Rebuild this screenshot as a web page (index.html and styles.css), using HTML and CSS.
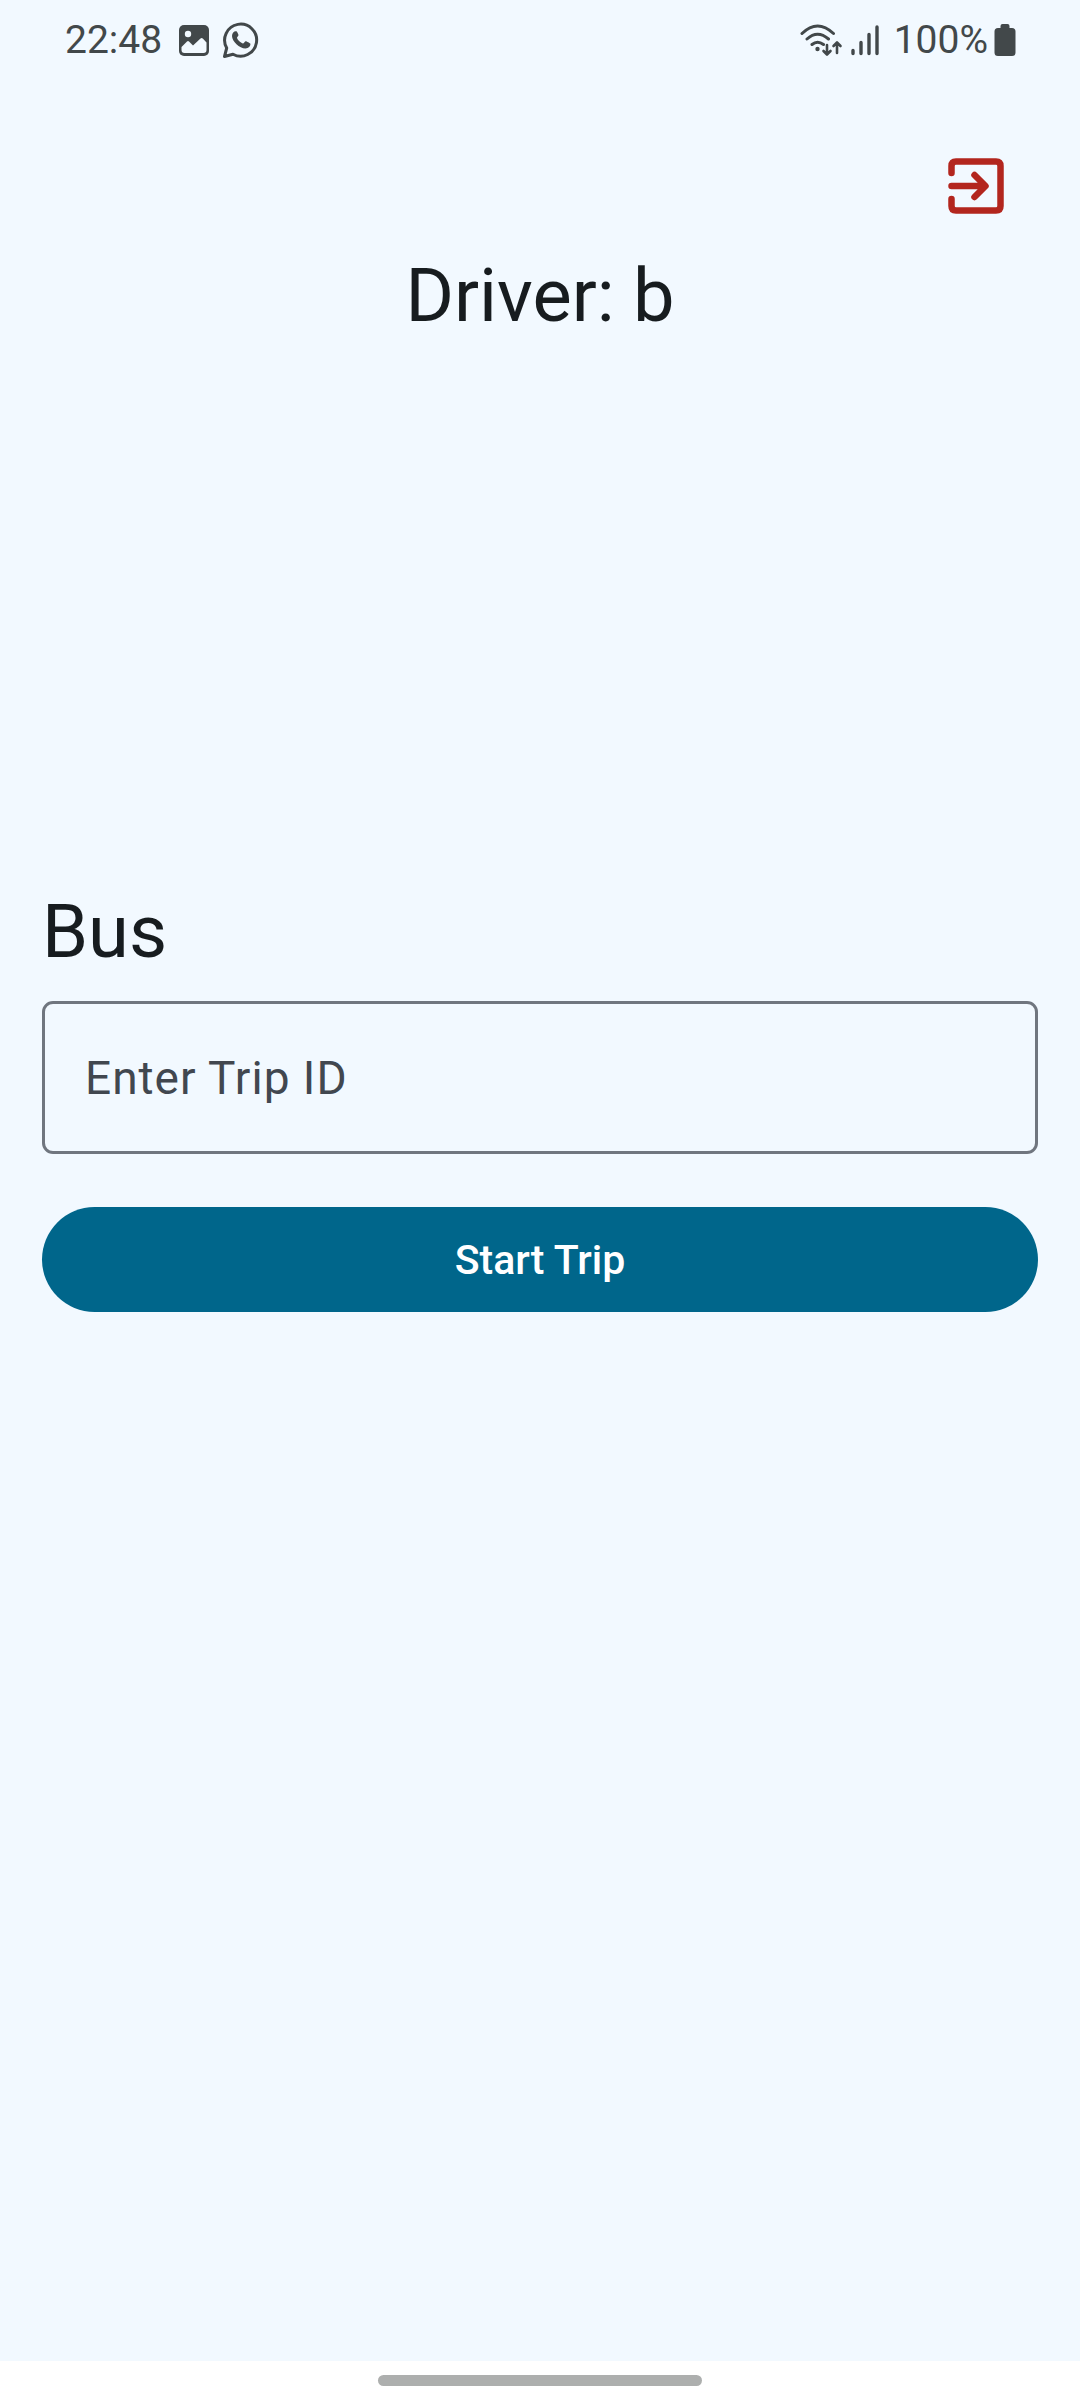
FILE: index.html
```html
<!DOCTYPE html>
<html lang="en">
<head>
<meta charset="utf-8">
<meta name="viewport" content="width=device-width, initial-scale=1">
<title>Driver</title>
<link rel="stylesheet" href="styles.css">
</head>
<body>
<div class="status-bar">
  <div class="status-group">
    <span class="status-time">22:48</span>
    <svg class="icon-image" width="32" height="32" viewBox="0 0 32 32" aria-hidden="true">
      <rect x="1" y="1" width="30" height="31" rx="5" fill="#42484a"/>
      <circle cx="10" cy="10" r="3.2" fill="#f2f9ff"/>
      <path d="M3.500 23L9 17.500Q10 16.500 11 17.500L15 21.500L22.500 14.500Q23.700 13.500 25 14.700L28.500 18.500V26Q28.500 29 25.500 29H6.500Q3.500 29 3.500 26Z" fill="#f2f9ff"/>
    </svg>
    <svg class="icon-chat" width="38" height="38" viewBox="0 0 38 38" aria-hidden="true">
      <path d="M2.500 35.500L4.700 27A16 16 0 1 1 11 33.200Z" fill="none" stroke="#42484a" stroke-width="3" stroke-linejoin="round"/>
      <path d="M13.600 10.200C12.300 10.100 10 12 10 15C10 20.500 17.500 27.500 23.500 27.500C26.500 27.500 28.600 25.300 28.400 22.800C28.300 22 24.200 20 23.500 20.200C22.600 20.500 21.800 22.700 20.800 22.500C18.500 21.700 15.800 19.200 15 17C14.900 16 16.500 15 16.500 14C16.400 13.200 15.100 10.400 14.400 10.200Z" fill="#42484a"/>
    </svg>
  </div>
  <div class="status-group">
    <svg width="82" height="34" viewBox="0 0 82 34" aria-hidden="true" fill="none" stroke="#42484a" stroke-width="3" stroke-linecap="round">
      <path d="M2 10.500Q17.500 -4.500 33.500 10.500M7 16Q17.500 6.500 28.500 16M12 21.500Q17.500 17 23.500 21.500"/>
      <circle cx="17.500" cy="26" r="2.200" fill="#42484a" stroke="none"/>
      <path d="M27 22V31M23.500 28L27 31.500L30.500 28M37 30V20M33.500 23L37 19.500L40.500 23" stroke-width="2.600" stroke-linejoin="round"/>
      <path d="M53 27.500V30.500M61 19.500V30.500M69 11.500V30.500M77 4V30.500" stroke-width="3.400"/>
    </svg>
    <span class="status-battery">100%</span>
    <svg class="icon-battery" width="22" height="34" viewBox="0 0 22 34" aria-hidden="true">
      <path d="M6.500 5V3Q6.500 1 8.500 1H13.500Q15.500 1 15.500 3V5H18Q21.500 5 21.500 8.500V29.500Q21.500 33 18 33H4Q.5 33 .5 29.500V8.500Q.5 5 4 5Z" fill="#42484a"/>
    </svg>
  </div>
</div>
<main class="screen">
  <div class="toolbar">
    <button class="exit-button" type="button" aria-label="Log out">
      <svg width="56" height="56" viewBox="0 0 56 56" aria-hidden="true" fill="none" stroke="#b3261e" stroke-width="6.500" stroke-linecap="round" stroke-linejoin="round">
        <path d="M3.500 15V8Q3.500 3.500 8 3.500H48Q52.500 3.500 52.500 8V48Q52.500 52.500 48 52.500H8Q3.500 52.500 3.500 48V41"/>
        <path d="M3.500 28H36M26.500 17L37.500 28L26.500 39"/>
      </svg>
    </button>
  </div>
  <h1 class="title driver">Driver: b</h1>
  <form class="trip-form">
    <label class="title" for="trip-id">Bus</label>
    <input class="trip-input" id="trip-id" type="text" placeholder="Enter Trip ID">
    <button class="start-button" type="button">Start Trip</button>
  </form>
</main>
<div class="nav-bar"><div class="nav-handle"></div></div>
</body>
</html>
```
FILE: styles.css
```css
* {
  box-sizing: border-box;
}

body {
  display: flex;
  flex-direction: column;
  min-height: 100vh;
  margin: 0;
  background: #f2f9ff;
  color: #171c1f;
  font-family: Roboto, sans-serif;
}

svg {
  display: block;
}

.status-bar {
  display: flex;
  justify-content: space-between;
  align-items: center;
  height: 80px;
  padding: 0 64px 0 65px;
  color: #42484a;
  font-size: 39px;
  line-height: 48px;
}

.status-group {
  display: flex;
  align-items: center;
}

.icon-image {
  margin-left: 16px;
}

.icon-chat {
  margin-left: 12px;
}

.status-battery {
  margin-left: 12px;
}

.icon-battery {
  margin-left: 6px;
}

.screen {
  flex: 1;
  padding: 48px 42px;
}

.toolbar {
  display: flex;
  justify-content: flex-end;
}

.exit-button {
  padding: 30px 34px 35px;
  border: 0;
  background: none;
}

.title {
  margin: 0;
  font-size: 74px;
  font-weight: 400;
  line-height: 94px;
}

.driver {
  text-align: center;
}

.trip-form {
  display: flex;
  flex-direction: column;
  margin-top: 542px;
}

.trip-input {
  height: 153px;
  margin-top: 22px;
  padding: 0 40px;
  border: 3px solid #70767f;
  border-radius: 11px;
  background: transparent;
  color: #171c1f;
  font: 400 46px/63px Roboto, sans-serif;
  letter-spacing: 1px;
}

.trip-input::placeholder {
  color: #41474f;
  opacity: 1;
}

.start-button {
  height: 105px;
  margin-top: 53px;
  border: 0;
  border-radius: 53px;
  background: #00668b;
  color: #fff;
  font: 500 41px/52px Roboto, sans-serif;
}

.nav-bar {
  display: flex;
  justify-content: center;
  height: 39px;
  padding-top: 14px;
  background: #fff;
}

.nav-handle {
  width: 30%;
  height: 11px;
  border-radius: 6px;
  background: #adafae;
}
```
